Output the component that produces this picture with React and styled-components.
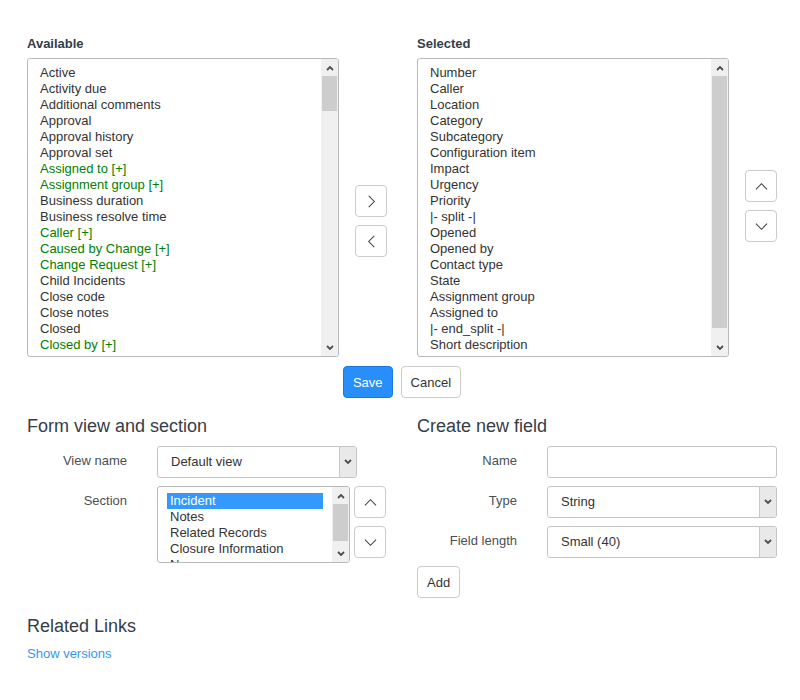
import React from 'react';
import styled, { createGlobalStyle } from 'styled-components';

const availableFields = [
  { label: 'Active' },
  { label: 'Activity due' },
  { label: 'Additional comments' },
  { label: 'Approval' },
  { label: 'Approval history' },
  { label: 'Approval set' },
  { label: 'Assigned to [+]', ref: true },
  { label: 'Assignment group [+]', ref: true },
  { label: 'Business duration' },
  { label: 'Business resolve time' },
  { label: 'Caller [+]', ref: true },
  { label: 'Caused by Change [+]', ref: true },
  { label: 'Change Request [+]', ref: true },
  { label: 'Child Incidents' },
  { label: 'Close code' },
  { label: 'Close notes' },
  { label: 'Closed' },
  { label: 'Closed by [+]', ref: true },
  { label: 'Comments and Work notes' },
  { label: 'Company [+]', ref: true },
];

const selectedFields = [
  'Number', 'Caller', 'Location', 'Category', 'Subcategory', 'Configuration item',
  'Impact', 'Urgency', 'Priority', '|- split -|', 'Opened', 'Opened by',
  'Contact type', 'State', 'Assignment group', 'Assigned to', '|- end_split -|',
  'Short description', 'Comments and Search Results', 'Work notes',
];

const sections = ['Incident', 'Notes', 'Related Records', 'Closure Information', 'New'];

function Chevron({ dir, size = 13 }) {
  const paths = {
    right: '4,1 10,7 4,13',
    left: '10,1 4,7 10,13',
    up: '1,10 7,4 13,10',
    down: '1,4 7,10 13,4',
  };
  return (
    <svg width={size} height={size} viewBox="0 0 14 14" fill="none">
      <polyline points={paths[dir]} stroke="#3a3f47" strokeWidth="1.1" />
    </svg>
  );
}

function SmallArrow({ dir }) {
  return (
    <svg width="8" height="6" viewBox="0 0 8 6" fill="none">
      <polyline
        points={dir === 'up' ? '1,5 4,2 7,5' : '1,1 4,4 7,1'}
        stroke="#4d4d4d"
        strokeWidth="1.8"
      />
    </svg>
  );
}

function ListBox({ width, height, thumbTop, thumbHeight, children }) {
  return (
    <Box $w={width} $h={height}>
      <Options>{children}</Options>
      <Scrollbar>
        <ScrollArrow><SmallArrow dir="up" /></ScrollArrow>
        <Track>
          <Thumb $top={thumbTop} $height={thumbHeight} />
        </Track>
        <ScrollArrow><SmallArrow dir="down" /></ScrollArrow>
      </Scrollbar>
    </Box>
  );
}

function FakeSelect({ value, width }) {
  return (
    <SelectBox $w={width}>
      <SelectValue>{value}</SelectValue>
      <SelectArrow><SmallArrow dir="down" /></SelectArrow>
    </SelectBox>
  );
}

export default function App() {
  return (
    <>
      <GlobalStyle />
      <Page>
        <SlushRow>
          <Column>
            <ColumnLabel>Available</ColumnLabel>
            <ListBox width={312} height={299} thumbTop={0} thumbHeight={35}>
              {availableFields.map((f) => (
                <Option key={f.label} $ref={f.ref}>{f.label}</Option>
              ))}
            </ListBox>
          </Column>
          <ButtonStack $top={150} $left={16}>
            <IconButton><Chevron dir="right" /></IconButton>
            <IconButton><Chevron dir="left" /></IconButton>
          </ButtonStack>
          <Column $left={30}>
            <ColumnLabel>Selected</ColumnLabel>
            <ListBox width={312} height={299} thumbTop={0} thumbHeight={252}>
              {selectedFields.map((f) => (
                <Option key={f}>{f}</Option>
              ))}
            </ListBox>
          </Column>
          <ButtonStack $top={135} $left={16}>
            <IconButton><Chevron dir="up" /></IconButton>
            <IconButton><Chevron dir="down" /></IconButton>
          </ButtonStack>
        </SlushRow>

        <Actions>
          <Button $primary>Save</Button>
          <Button>Cancel</Button>
        </Actions>

        <BottomRow>
          <Panel>
            <SectionTitle>Form view and section</SectionTitle>
            <FormRows>
              <FormRow>
                <FieldLabel>View name</FieldLabel>
                <FakeSelect value="Default view" width={200} />
              </FormRow>
              <FormRow>
                <FieldLabel>Section</FieldLabel>
                <SectionControl>
                  <ListBox width={193} height={77} thumbTop={0} thumbHeight={37}>
                    {sections.map((s, i) => (
                      <Option key={s} $selected={i === 0}>{s}</Option>
                    ))}
                  </ListBox>
                  <ButtonStack $top={0} $left={4}>
                    <IconButton><Chevron dir="up" /></IconButton>
                    <IconButton><Chevron dir="down" /></IconButton>
                  </ButtonStack>
                </SectionControl>
              </FormRow>
            </FormRows>
          </Panel>

          <Panel>
            <SectionTitle>Create new field</SectionTitle>
            <FormRows>
              <FormRow>
                <FieldLabel>Name</FieldLabel>
                <TextInput type="text" />
              </FormRow>
              <FormRow>
                <FieldLabel>Type</FieldLabel>
                <FakeSelect value="String" width={230} />
              </FormRow>
              <FormRow>
                <FieldLabel>Field length</FieldLabel>
                <FakeSelect value="Small (40)" width={230} />
              </FormRow>
            </FormRows>
            <AddRow>
              <Button>Add</Button>
            </AddRow>
          </Panel>
        </BottomRow>

        <RelatedTitle>Related Links</RelatedTitle>
        <LinkText href="#">Show versions</LinkText>
      </Page>
    </>
  );
}

const GlobalStyle = createGlobalStyle`
  body {
    margin: 0;
    background: #fff;
    font-family: "Liberation Sans", Arial, sans-serif;
    font-size: 13px;
    color: #333;
  }
`;

const Page = styled.div`
  padding: 35px 0 0 27px;
  width: 750px;
`;

const SlushRow = styled.div`
  display: flex;
  align-items: flex-start;
`;

const Column = styled.div`
  display: flex;
  flex-direction: column;
  margin-left: ${props => props.$left || 0}px;
`;

const ColumnLabel = styled.div`
  font-weight: bold;
  font-size: 13px;
  line-height: 18px;
  color: #343d47;
  margin-bottom: 5px;
`;

const ButtonStack = styled.div`
  display: flex;
  flex-direction: column;
  gap: 8px;
  padding-top: ${props => props.$top}px;
  margin-left: ${props => props.$left}px;
`;

const IconButton = styled.button`
  width: 32px;
  height: 32px;
  padding: 0;
  display: flex;
  align-items: center;
  justify-content: center;
  background: #fff;
  border: 1px solid #cbcbcb;
  border-radius: 4px;
  cursor: pointer;
`;

const Box = styled.div`
  box-sizing: border-box;
  width: ${props => props.$w}px;
  height: ${props => props.$h}px;
  display: flex;
  border: 1px solid #b9b9b9;
  border-radius: 3px;
  background: #fff;
  overflow: hidden;
`;

const Options = styled.div`
  flex: 1;
  min-width: 0;
  padding: 6px 9px;
  overflow: hidden;
`;

const Option = styled.div`
  font-size: 13px;
  line-height: 16px;
  height: 16px;
  padding: 0 3px;
  white-space: nowrap;
  color: ${props => props.$selected ? '#fff' : props.$ref ? '#008000' : '#333'};
  background: ${props => props.$selected ? '#3399ff' : 'transparent'};
`;

const Scrollbar = styled.div`
  width: 17px;
  flex-shrink: 0;
  display: flex;
  flex-direction: column;
  background: #f0f0f0;
`;

const ScrollArrow = styled.div`
  height: 17px;
  flex-shrink: 0;
  display: flex;
  align-items: center;
  justify-content: center;
`;

const Track = styled.div`
  flex: 1;
  position: relative;
  background: #f0f0f0;
`;

const Thumb = styled.div`
  position: absolute;
  left: 1px;
  right: 1px;
  top: ${props => props.$top}px;
  height: ${props => props.$height}px;
  background: #cdcdcd;
`;

const Actions = styled.div`
  display: flex;
  justify-content: center;
  gap: 8px;
  margin-top: 9px;
`;

const Button = styled.button`
  height: 32px;
  padding: 0 9px;
  font-family: "Liberation Sans", Arial, sans-serif;
  font-size: 13px;
  border-radius: 4px;
  cursor: pointer;
  color: ${props => props.$primary ? '#fff' : '#333'};
  background: ${props => props.$primary ? '#278efc' : '#fff'};
  border: 1px solid ${props => props.$primary ? '#1b7ae0' : '#cbcbcb'};
`;

const BottomRow = styled.div`
  display: flex;
  gap: 30px;
  margin-top: 18px;
  align-items: flex-start;
`;

const Panel = styled.div`
  width: 360px;
`;

const SectionTitle = styled.h3`
  margin: 0 0 10px;
  font-size: 18px;
  line-height: 20px;
  font-weight: normal;
  color: #343d47;
`;

const FormRows = styled.div`
  display: flex;
  flex-direction: column;
  gap: 8px;
`;

const FormRow = styled.div`
  display: grid;
  grid-template-columns: 100px 1fr;
  column-gap: 30px;
  align-items: start;
`;

const FieldLabel = styled.label`
  text-align: right;
  line-height: 30px;
  font-size: 13px;
  color: #4a4f57;
`;

const SectionControl = styled.div`
  display: flex;
  align-items: flex-start;
`;

const SelectBox = styled.div`
  box-sizing: border-box;
  width: ${props => props.$w}px;
  height: 32px;
  display: flex;
  border: 1px solid #c4c4c4;
  border-radius: 3px;
  background: #fff;
  overflow: hidden;
`;

const SelectValue = styled.div`
  flex: 1;
  padding-left: 13px;
  line-height: 30px;
  font-size: 13px;
  color: #333;
`;

const SelectArrow = styled.div`
  width: 16px;
  display: flex;
  align-items: center;
  justify-content: center;
  background: #e9e9e9;
  border-left: 1px solid #c8c8c8;
`;

const TextInput = styled.input`
  box-sizing: border-box;
  width: 230px;
  height: 32px;
  border: 1px solid #c4c4c4;
  border-radius: 3px;
  padding: 0 10px;
  font-family: "Liberation Sans", Arial, sans-serif;
  font-size: 13px;
`;

const AddRow = styled.div`
  margin-top: 8px;
`;

const RelatedTitle = styled.h3`
  margin: 18px 0 0;
  font-size: 18px;
  line-height: 20px;
  font-weight: normal;
  color: #343d47;
`;

const LinkText = styled.a`
  display: inline-block;
  margin-top: 10px;
  font-size: 13px;
  line-height: 16px;
  color: #3396f5;
  text-decoration: none;
`;
